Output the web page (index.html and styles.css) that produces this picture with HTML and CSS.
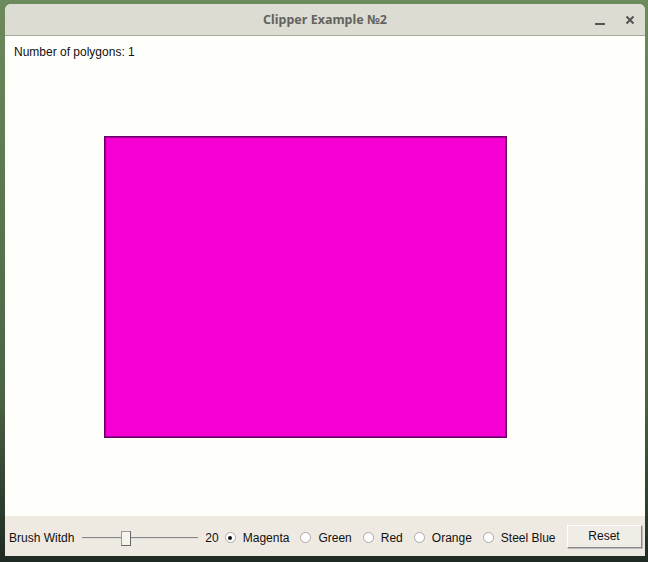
FILE: index.html
```html
<!DOCTYPE html>
<html>
<head>
<meta charset="utf-8">
<link rel="stylesheet" href="styles.css">
</head>
<body>
<div class="desktop">
  <div class="window">
    <div class="titlebar">
      <span class="title">Clipper Example №2</span>
      <div class="controls">
        <span class="min"></span>
        <svg class="close" width="10" height="10" viewBox="0 0 10 10"><path d="M1.5 1.5L8.5 8.5M8.5 1.5L1.5 8.5" stroke="#555" stroke-width="2"/></svg>
      </div>
    </div>
    <div class="canvas">
      <div class="info">Number of polygons: 1</div>
      <div class="poly"></div>
    </div>
    <div class="toolbar">
      <span class="lbl">Brush Witdh</span>
      <div class="slider"><div class="track"></div><div class="handle"></div></div>
      <span class="val">20</span>
      <label class="radio"><span class="dot on"></span>Magenta</label>
      <label class="radio"><span class="dot"></span>Green</label>
      <label class="radio"><span class="dot"></span>Red</label>
      <label class="radio"><span class="dot"></span>Orange</label>
      <label class="radio"><span class="dot"></span>Steel Blue</label>
      <button class="reset">Reset</button>
    </div>
  </div>
</div>
</body>
</html>
```
FILE: styles.css
```css
html, body { margin: 0; padding: 0; }
body {
  width: 648px; height: 562px; overflow: hidden;
  background: linear-gradient(to bottom, #6d8a5c 0%, #4c6444 70%, #1f2a22 100%);
  font-family: "Liberation Sans", Arial, sans-serif;
}
.desktop { padding: 4px 3px 0 5px; }
.window {
  width: 640px;
  height: 552px;
  display: flex; flex-direction: column;
  border-radius: 6px 6px 0 0;
  overflow: hidden;
  background: #fdfdf7;
}
.titlebar {
  height: 31px;
  background: #dcdcd3;
  border-bottom: 1px solid #a8a89e;
  display: flex; align-items: center; justify-content: center;
  position: relative;
}
.title {
  font-family: "Noto Sans", "Open Sans", sans-serif;
  font-weight: bold; font-size: 12.5px; color: #636360;
}
.controls {
  position: absolute; right: 10px; top: 11px;
  display: flex; align-items: center; gap: 20px;
}
.min { width: 10px; height: 2px; background: #555; margin-top: 8px; }
.close { display: block; }
.canvas {
  flex: 1;
  position: relative;
  background: #fefefa;
}
.info { font-size: 12px; color: #111; padding: 9px 0 0 9px; }
.poly {
  position: absolute;
  left: 99px; top: 100px;
  width: 401px; height: 300px;
  background: #f700d4;
  border: 1px solid #6b0066;
  box-shadow: inset 0 0 0 1px #a0009a;
}
.toolbar {
  height: 40px;
  box-sizing: border-box;
  padding: 3px 4px 0 4px;
  background: #eeeae2;
  display: flex; align-items: center;
  font-size: 12px; color: #111;
  white-space: nowrap;
}
.toolbar > * { flex-shrink: 0; }
.lbl { margin-right: 8px; }
.slider { position: relative; width: 116px; height: 16px; }
.track { position: absolute; left: 0; right: 0; top: 7px; height: 1px; background: #888; border-bottom: 1px solid #ddd; }
.handle {
  position: absolute; left: 39px; top: 1px; width: 8px; height: 13px;
  background: #f6f4ee; border: 1px solid #999; border-right-color: #666; border-bottom-color: #666;
}
.val { margin-left: 7px; margin-right: 6px; }
.radio { display: flex; align-items: center; margin-right: 11px; }
.dot {
  width: 9px; height: 9px; border-radius: 50%;
  background: #fff; border: 1px solid #aaa;
  margin-right: 7px; position: relative;
}
.dot.on::after {
  content: ""; position: absolute; left: 2.5px; top: 2.5px; width: 4px; height: 4px; border-radius: 50%; background: #111;
}
.reset {
  margin-left: auto; margin-right: 0; margin-top: -3px;
  width: 75px; height: 23px;
  font-family: "Liberation Sans", Arial, sans-serif; font-size: 12px; color: #111;
  background: #f0ede6;
  border: 1px solid #fff; border-right-color: #888; border-bottom-color: #888;
  box-shadow: 1px 1px 0 #bbb;
  padding: 0;
}
```
